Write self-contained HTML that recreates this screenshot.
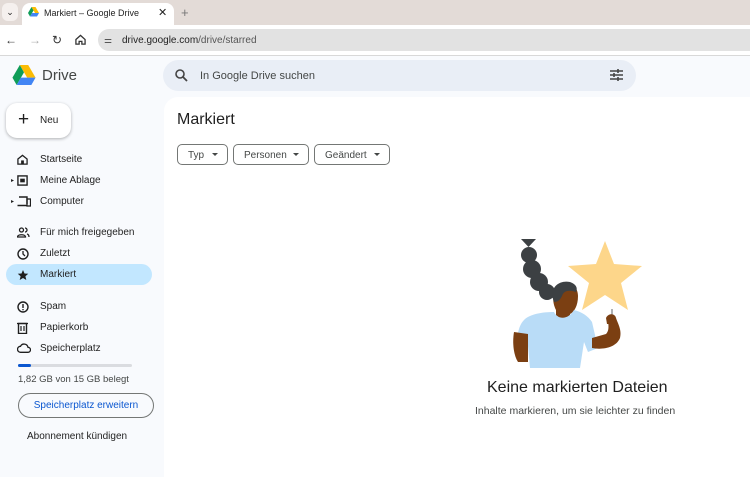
<!DOCTYPE html>
<html><head><meta charset="utf-8"><style>
*{margin:0;padding:0;box-sizing:border-box}
body{width:750px;height:468px;overflow:hidden;font-family:"Liberation Sans",Arial,sans-serif;background:#f8fafd;position:relative;color:#1f1f1f}
.abs{position:absolute}
.nav{position:absolute;left:6px;width:146px;height:21px;border-radius:11px;font-size:10px;color:#1f1f1f}
.nav svg{position:absolute;left:11px;top:5px}
.nav span{position:absolute;left:34px;top:5px}
.chip{position:absolute;top:144px;height:21px;border:1px solid #747775;border-radius:5px;font-size:10px;color:#444746;padding-left:10px;padding-top:5px}
.chip:after{content:"";position:absolute;right:9px;top:8px;border:3px solid transparent;border-top:3px solid #444746}
</style></head><body>
<div class="abs" style="left:0;top:0;width:750px;height:25px;background:#e3dbd7"></div>
<div class="abs" style="left:2px;top:3px;width:16px;height:18px;background:#f5f0ee;border-radius:6px;font-size:9px;text-align:center;line-height:18px">&#8964;</div>
<div class="abs" style="left:22px;top:3px;width:152px;height:24px;background:#fff;border-radius:8px 8px 0 0"></div>
<svg class="abs" style="left:28px;top:7px" width="11" height="10" viewBox="0 0 22 20"><path d="M7 0h8l7 12h-8z" fill="#fbbc04"/><path d="M7 0L0 12l4 7 7-12z" fill="#0f9d58"/><path d="M4 19h14l4-7H8z" fill="#4285f4"/></svg>
<div class="abs" style="left:44px;top:8px;font-size:9px;color:#1f1f1f">Markiert – Google Drive</div>
<div class="abs" style="left:158px;top:6px;font-size:11px">✕</div>
<div class="abs" style="left:181px;top:5px;font-size:13px;color:#777">+</div>
<div class="abs" style="left:0;top:25px;width:750px;height:30px;background:#fff"></div>
<div class="abs" style="left:5px;top:33px;font-size:12px;color:#333">←</div>
<div class="abs" style="left:29px;top:33px;font-size:12px;color:#aaa">→</div>
<div class="abs" style="left:52px;top:33px;font-size:12px;color:#333">↻</div>
<svg class="abs" style="left:75px;top:34px" width="11" height="11" viewBox="0 0 12 12"><path d="M1 6L6 1.5 11 6V11H7.5V8h-3v3H1z" fill="none" stroke="#333" stroke-width="1.4"/></svg>
<div class="abs" style="left:98px;top:29px;width:652px;height:22px;background:#e2e2e2;border-radius:11px 0 0 11px"></div>
<div class="abs" style="left:104px;top:35px;font-size:9px;color:#444">⚌</div>
<div class="abs" style="left:122px;top:35px;font-size:10px;color:#1f1f1f">drive.google.com<span style="color:#555">/drive/starred</span></div>
<div class="abs" style="left:0;top:55px;width:750px;height:1px;background:#d8d8d8"></div>
<svg class="abs" style="left:12px;top:65px" width="24" height="21" viewBox="0 0 22 20"><path d="M7 0h8l7 12h-8z" fill="#fbbc04"/><path d="M7 0L0 12l4 7 7-12z" fill="#0f9d58"/><path d="M4 19h14l4-7H8z" fill="#4285f4"/></svg>
<div class="abs" style="left:42px;top:67px;font-size:15px;color:#444746">Drive</div>
<div class="abs" style="left:163px;top:60px;width:473px;height:31px;background:#e9eef6;border-radius:16px"></div>
<svg class="abs" style="left:175px;top:69px" width="13" height="13" viewBox="0 0 13 13"><circle cx="5" cy="5" r="4" fill="none" stroke="#444" stroke-width="1.6"/><path d="M8 8l4 4" stroke="#444" stroke-width="1.8"/></svg>
<div class="abs" style="left:200px;top:70px;font-size:11px;color:#444746">In Google Drive suchen</div>
<svg class="abs" style="left:610px;top:69px" width="13" height="12" viewBox="0 0 13 12"><path d="M0 2h13M0 6h13M0 10h13" stroke="#444" stroke-width="1.4"/><path d="M8 0v4M4 4v4M8 8v4" stroke="#444" stroke-width="1.6"/></svg>
<div class="abs" style="left:6px;top:103px;width:65px;height:35px;background:#fff;border-radius:11px;box-shadow:0 1px 3px rgba(0,0,0,.3)"></div>
<div class="abs" style="left:18px;top:109px;font-size:19px;font-weight:300;color:#1f1f1f">+</div>
<div class="abs" style="left:40px;top:115px;font-size:10px">Neu</div>
<div class="nav" style="top:149px"><svg width="11" height="11" viewBox="0 0 12 12"><path d="M1 5.5L6 1.5l5 4V11H1z" fill="none" stroke="#1f1f1f" stroke-width="1.4"/><rect x="4.5" y="7" width="3" height="4" fill="#1f1f1f"/></svg><span>Startseite</span></div>
<div class="abs" style="left:11px;top:177px;font-size:6px">▸</div>
<div class="nav" style="top:170px"><svg width="11" height="11" viewBox="0 0 12 12"><rect x="1" y="1" width="10" height="10" fill="none" stroke="#1f1f1f" stroke-width="1.5"/><rect x="3.5" y="4" width="5" height="4" fill="#1f1f1f"/></svg><span>Meine Ablage</span></div>
<div class="abs" style="left:11px;top:198px;font-size:6px">▸</div>
<div class="nav" style="top:191px"><svg width="14" height="11" viewBox="0 0 14 11"><path d="M2 1h8v7M0.5 9.5h9" fill="none" stroke="#1f1f1f" stroke-width="1.4"/><rect x="10" y="3" width="3.5" height="7" fill="none" stroke="#1f1f1f" stroke-width="1.3"/></svg><span>Computer</span></div>
<div class="nav" style="top:222px"><svg width="13" height="11" viewBox="0 0 13 11"><circle cx="4.5" cy="3" r="2" fill="none" stroke="#1f1f1f" stroke-width="1.3"/><path d="M0.5 10c0-3 8-3 8 0z" fill="none" stroke="#1f1f1f" stroke-width="1.3"/><path d="M8 1a2 2 0 010 4M10 7c2 .5 2 2 2 3" fill="none" stroke="#1f1f1f" stroke-width="1.3"/></svg><span>Für mich freigegeben</span></div>
<div class="nav" style="top:243px"><svg width="12" height="12" viewBox="0 0 12 12"><circle cx="6" cy="6" r="5" fill="none" stroke="#1f1f1f" stroke-width="1.4"/><path d="M6 3v3l2 2" fill="none" stroke="#1f1f1f" stroke-width="1.3"/></svg><span>Zuletzt</span></div>
<div class="nav" style="top:264px;background:#c2e7ff"><svg width="12" height="12" viewBox="0 0 24 24"><path d="M12 2l3 7 7.5.6-5.7 5 1.8 7.4L12 18l-6.6 4 1.8-7.4-5.7-5L9 9z" fill="#1f1f1f"/></svg><span>Markiert</span></div>
<div class="nav" style="top:296px"><svg width="12" height="12" viewBox="0 0 12 12"><circle cx="6" cy="6" r="5" fill="none" stroke="#1f1f1f" stroke-width="1.4"/><path d="M6 3v4M6 8v1.3" stroke="#1f1f1f" stroke-width="1.4"/></svg><span>Spam</span></div>
<div class="nav" style="top:317px"><svg width="11" height="12" viewBox="0 0 11 12"><rect x="1.5" y="1.5" width="8" height="10" fill="none" stroke="#1f1f1f" stroke-width="1.4"/><path d="M0 1.5h11M4 4v5M7 4v5" stroke="#1f1f1f" stroke-width="1.2"/></svg><span>Papierkorb</span></div>
<div class="nav" style="top:338px"><svg width="14" height="10" viewBox="0 0 14 10"><path d="M3.5 9.3h7.5a2.5 2.5 0 000-5 4 4 0 00-7.5-1A3 3 0 003.5 9.3z" fill="none" stroke="#1f1f1f" stroke-width="1.3"/></svg><span>Speicherplatz</span></div>
<div class="abs" style="left:18px;top:364px;width:114px;height:3px;background:#dadce0;border-radius:2px"></div>
<div class="abs" style="left:18px;top:364px;width:13px;height:3px;background:#0b57d0;border-radius:2px"></div>
<div class="abs" style="left:18px;top:374px;font-size:9.5px;color:#444746">1,82 GB von 15 GB belegt</div>
<div class="abs" style="left:18px;top:393px;width:136px;height:25px;border:1px solid #747775;border-radius:13px;font-size:10px;color:#0b57d0;text-align:center;line-height:23px">Speicherplatz erweitern</div>
<div class="abs" style="left:27px;top:431px;font-size:10px;color:#1f1f1f">Abonnement kündigen</div>
<div class="abs" style="left:164px;top:97px;width:600px;height:380px;background:#fff;border-radius:14px 0 0 0"></div>
<div class="abs" style="left:177px;top:111px;font-size:16px;color:#1f1f1f">Markiert</div>
<div class="chip" style="left:177px;width:51px">Typ</div>
<div class="chip" style="left:233px;width:76px">Personen</div>
<div class="chip" style="left:314px;width:76px">Geändert</div>
<svg class="abs" style="left:500px;top:236px" width="150" height="132" viewBox="0 0 150 132">
<path d="M21 3h15l-7.5 8z" fill="#3c4043"/>
<circle cx="29" cy="19" r="8" fill="#3c4043"/><circle cx="32" cy="33" r="9" fill="#3c4043"/><circle cx="39" cy="46" r="9" fill="#3c4043"/><circle cx="47" cy="56" r="8" fill="#3c4043"/>
<path d="M105 5l9 23 28 2-21 17 7 27-23-15-23 15 7-27-21-17 28-2z" fill="#fdd68a"/>
<path d="M112 73v10" stroke="#5f6368" stroke-width="1"/><circle cx="112" cy="86" r="2.5" fill="#fff" stroke="#5f6368"/>
<path d="M58 50c8-6 20-2 20 10 0 10-4 16-8 18v10H56V74c-4-8-4-18 2-24z" fill="#7b3f12"/>
<path d="M52 60c0-10 8-16 18-14 6 2 8 6 6 10-6-2-12-2-14 4-2 4-4 6-8 6z" fill="#3c4043"/>
<path d="M24 84c6-6 18-8 30-8 4 8 14 8 20-2 8 2 14 6 18 12l6 26-10 4-4-10-4 26H30l-2-22-10 6c-2-14 0-26 6-32z" fill="#b9dcf7"/>
<path d="M14 96c-2 12 0 24 4 30h10V98z" fill="#7b3f12"/>
<path d="M92 112c10 2 24 0 28-10 2-8-2-14-4-20l-8 0c0 6 2 12-2 16l-14 4z" fill="#7b3f12"/>
<path d="M106 82c2-5 9-5 10 0l-1 6h-8z" fill="#7b3f12"/>
</svg>
<div class="abs" style="left:487px;top:379px;font-size:16px;color:#1f1f1f">Keine markierten Dateien</div>
<div class="abs" style="left:475px;top:405px;font-size:10.5px;color:#444746">Inhalte markieren, um sie leichter zu finden</div>
</body></html>
